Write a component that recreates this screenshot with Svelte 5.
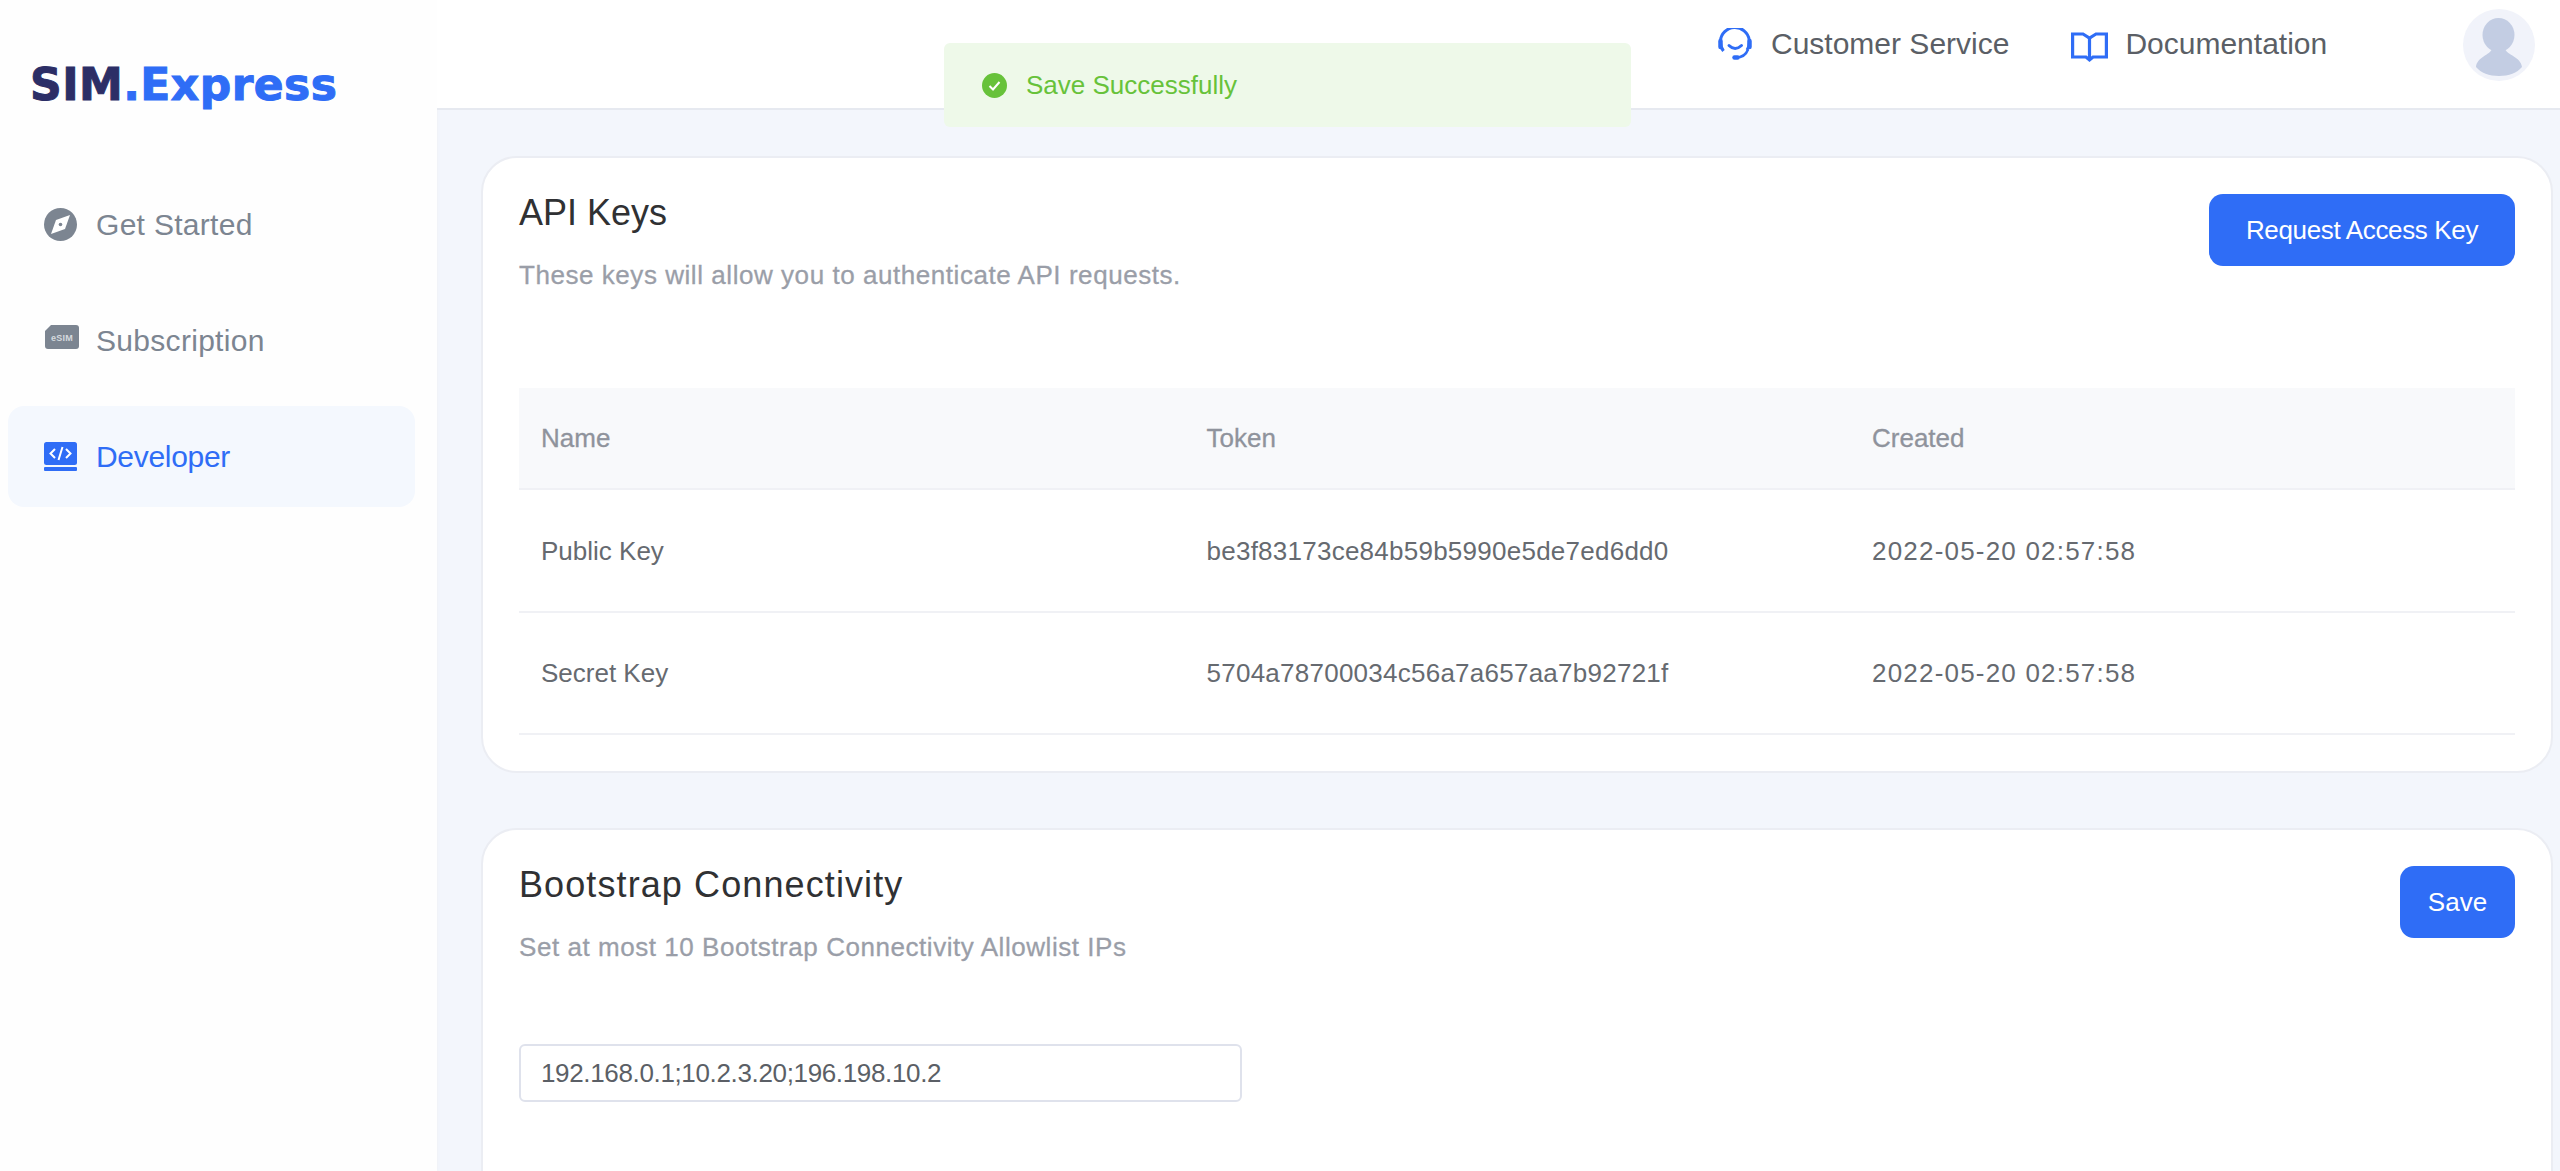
<script>
	const rows = [
		{ name: 'Public Key', token: 'be3f83173ce84b59b5990e5de7ed6dd0', created: '2022-05-20 02:57:58' },
		{ name: 'Secret Key', token: '5704a78700034c56a7a657aa7b92721f', created: '2022-05-20 02:57:58' }
	];
</script>

<div class="app">
	<aside class="sidebar">
		<div class="logo"><span class="sim">SIM</span><span class="express">.Express</span></div>
		<nav class="nav">
			<div class="item">
				<svg width="33" height="33" viewBox="0 0 33 33">
					<circle cx="16.5" cy="16.5" r="16.5" fill="#7c8591" />
					<path d="M26 7 L21 21 L7 26 L12 12 Z" fill="#fff" />
					<circle cx="16.5" cy="16.5" r="1.8" fill="#7c8591" />
				</svg>
				<span>Get Started</span>
			</div>
			<div class="item">
				<svg class="esim" width="34" height="24" viewBox="0 0 34 24">
					<path d="M6 0 H31 a3 3 0 0 1 3 3 V21 a3 3 0 0 1 -3 3 H3 a3 3 0 0 1 -3 -3 V6 Z" fill="#7c8591" />
					<text x="17" y="15.5" text-anchor="middle" font-size="9" font-weight="700" fill="#d5d9de" font-family="Liberation Sans">eSIM</text>
				</svg>
				<span>Subscription</span>
			</div>
			<div class="item active">
				<svg width="33" height="29" viewBox="0 0 33 29">
					<rect width="33" height="23" rx="2.5" fill="#2f6df6" />
					<rect y="25" width="33" height="4" rx="1" fill="#2f6df6" />
					<path d="M11 7 L6.5 11.5 L11 16 M22 7 L26.5 11.5 L22 16 M18.5 5 L14.5 18" fill="none" stroke="#fff" stroke-width="2" />
				</svg>
				<span>Developer</span>
			</div>
		</nav>
	</aside>

	<div class="main">
		<header class="header">
			<div class="link">
				<svg width="38" height="33" viewBox="0 0 38 33" fill="none" stroke="#2f6df6" stroke-width="3">
					<path d="M7.5 23 A14.5 14.5 0 1 1 31 22" />
					<path d="M4.5 13 v6 M33.5 13 v6" stroke-width="4.5" stroke-linecap="round" />
					<path d="M13 17.5 q6 6 12.5 0" stroke-linecap="round" />
					<path d="M18.5 29.5 h3" stroke-width="4.5" stroke-linecap="round" />
					<path d="M20 29.5 q9 0 12 -8" stroke-width="2.5" />
				</svg>
				<span>Customer Service</span>
			</div>
			<div class="link docs">
				<svg width="37" height="31" viewBox="0 0 37 31" fill="none" stroke="#2f6df6" stroke-width="3.2">
					<path d="M1.6 2 H12 L18.5 6 L25 2 H35.4 V25 H22 L18.5 28 L15 25 H1.6 Z" />
					<path d="M18.5 6 V27" />
				</svg>
				<span>Documentation</span>
			</div>
			<div class="avatar">
				<svg width="72" height="72" viewBox="0 0 72 72">
					<ellipse cx="35.5" cy="26" rx="16" ry="17" fill="#c3cde3" />
					<path d="M29 40 C27 46 14 48 13 58 C18 64 26 67 36 67 C46 67 54 64 59 58 C58 48 44 46 42 40 Z" fill="#c3cde3" />
				</svg>
			</div>
		</header>

		<main class="content">
			<section class="card first">
				<div class="card-head">
					<div>
						<h2>API Keys</h2>
						<p>These keys will allow you to authenticate API requests.</p>
					</div>
					<button class="btn wide">Request Access Key</button>
				</div>
				<div class="table">
					<div class="row head">
						<div>Name</div>
						<div>Token</div>
						<div>Created</div>
					</div>
					{#each rows as row}
						<div class="row">
							<div>{row.name}</div>
							<div class="token">{row.token}</div>
							<div class="date">{row.created}</div>
						</div>
					{/each}
				</div>
			</section>

			<section class="card second">
				<div class="card-head">
					<div>
						<h2>Bootstrap Connectivity</h2>
						<p>Set at most 10 Bootstrap Connectivity Allowlist IPs</p>
					</div>
					<button class="btn">Save</button>
				</div>
				<input class="ips" value="192.168.0.1;10.2.3.20;196.198.10.2" />
			</section>
		</main>
	</div>

	<div class="toast">
		<svg width="25" height="25" viewBox="0 0 25 25">
			<circle cx="12.5" cy="12.5" r="12.5" fill="#67c23a" />
			<path d="M7.5 13 L11 16.5 L17.5 9" fill="none" stroke="#fff" stroke-width="2" />
		</svg>
		<span>Save Successfully</span>
	</div>
</div>

<style>
	:global(body) {
		background: #f3f6fc;
	}
	.app {
		display: flex;
		height: 100vh;
		overflow: hidden;
		font-family: 'Liberation Sans', Arial, sans-serif;
		background: #f3f6fc;
	}
	.sidebar {
		width: 437px;
		flex: none;
		background: #fefefe;
		box-shadow: 1px 0 2px #f0f2f7;
	}
	.logo {
		height: 109px;
		padding: 59px 0 0 30px;
		box-sizing: border-box;
		font-family: 'DejaVu Sans', sans-serif;
		font-weight: 700;
		font-size: 44px;
		line-height: 52px;
		letter-spacing: 0.45px;
		white-space: nowrap;
		-webkit-text-stroke: 1px currentColor;
	}
	.sim {
		color: #2c2e66;
	}
	.express {
		color: #2f6df6;
	}
	.nav {
		display: flex;
		flex-direction: column;
		gap: 15px;
		padding-top: 65px;
	}
	.item {
		display: flex;
		align-items: center;
		height: 101px;
		margin: 0 22px 0 8px;
		padding-left: 36px;
		border-radius: 16px;
		font-size: 30px;
		letter-spacing: 0.3px;
		color: #7c8591;
	}
	.item svg {
		flex: none;
		margin-right: 19px;
	}
	.item svg.esim {
		margin: -8px 17px 0 1px;
	}
	.item.active {
		background: #f4f8fe;
		color: #2f6df6;
		letter-spacing: -0.3px;
	}
	.main {
		flex: 1;
		min-width: 0;
		display: flex;
		flex-direction: column;
	}
	.header {
		height: 110px;
		flex: none;
		box-sizing: border-box;
		display: flex;
		align-items: flex-start;
		background: #fff;
		border-bottom: 2px solid #e6e9f0;
		padding-left: 1279px;
	}
	.link {
		display: flex;
		align-items: center;
		gap: 17px;
		height: 88px;
		font-size: 30px;
		color: #5b5f66;
	}
	.docs {
		margin-left: 62px;
	}
	.docs svg {
		margin-top: 7px;
	}
	.avatar {
		width: 72px;
		height: 72px;
		margin: 9px 25px 0 auto;
		border-radius: 50%;
		background: #f1f3fa;
		overflow: hidden;
	}
	.content {
		padding: 46px 7px 0 44px;
		display: flex;
		flex-direction: column;
		gap: 55px;
	}
	.card {
		background: #fff;
		border: 2px solid #ebedf3;
		border-radius: 36px;
		box-sizing: border-box;
		padding: 34px 36px 0;
	}
	.first {
		height: 617px;
	}
	.card .btn {
		margin-top: 2px;
	}
	.second {
		height: 500px;
		flex: none;
	}
	.second h2 {
		letter-spacing: 1.1px;
	}
	.card-head {
		display: flex;
		justify-content: space-between;
		align-items: flex-start;
	}
	h2 {
		margin: 0;
		font-size: 36px;
		font-weight: 400;
		line-height: 42px;
		color: #303133;
	}
	p {
		margin: 26px 0 0;
		font-size: 26px;
		line-height: 30px;
		color: #9a9ea8;
		letter-spacing: 0.55px;
		-webkit-text-stroke: 0.3px currentColor;
	}
	.btn {
		height: 72px;
		width: 115px;
		border: none;
		border-radius: 14px;
		background: #2f6df6;
		color: #fff;
		font-family: inherit;
		font-size: 26px;
		padding: 0;
	}
	.btn.wide {
		width: 306px;
		letter-spacing: -0.35px;
	}
	.table {
		margin-top: 98px;
	}
	.row {
		display: grid;
		grid-template-columns: 665.5px 665.5px 1fr;
		align-items: center;
		height: 122.5px;
		padding: 2px 0 0 22px;
		border-bottom: 2px solid #f0f1f5;
		box-sizing: border-box;
		font-size: 26px;
		color: #666a70;
	}
	.token {
		letter-spacing: 0.25px;
	}
	.date {
		letter-spacing: 1.2px;
	}
	.row.head {
		height: 102px;
		padding-top: 0;
		background: #f8f9fb;
		color: #8f939c;
		-webkit-text-stroke: 0.3px currentColor;
	}
	.ips {
		display: block;
		width: 723px;
		height: 58px;
		margin-top: 82px;
		box-sizing: border-box;
		border: 2px solid #dfe2ec;
		border-radius: 6px;
		padding: 0 20px;
		font-family: inherit;
		font-size: 26px;
		letter-spacing: -0.35px;
		color: #5b5f66;
		background: #fff;
		outline: none;
	}
	.toast {
		position: absolute;
		left: 944px;
		top: 43px;
		width: 687px;
		height: 84px;
		box-sizing: border-box;
		display: flex;
		align-items: center;
		gap: 19px;
		padding-left: 38px;
		border-radius: 6px;
		background: #eef9e9;
		color: #67c23a;
		font-size: 26px;
	}
</style>
